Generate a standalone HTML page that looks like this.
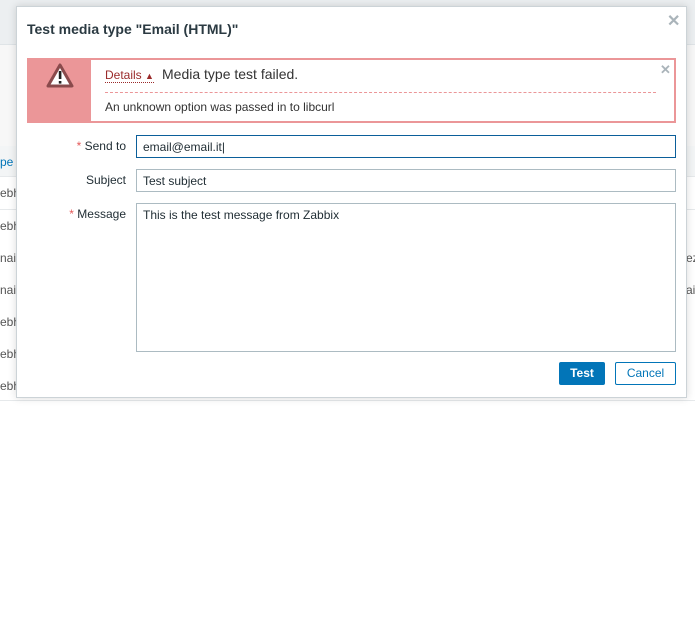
<!DOCTYPE html>
<html><head><style>
body{margin:0;width:695px;height:639px;background:#fff;font-family:"Liberation Sans",Arial,sans-serif;font-size:12px;color:#1f2c33;position:relative;overflow:hidden}
.bg{position:absolute;left:0;top:0;width:695px;height:400px;background:#f7f7f7}
.top{position:absolute;left:0;top:0;width:695px;height:44px;background:#eceff1;border-bottom:1px solid #dfe4e7}
.row{position:absolute;left:0;width:695px;height:32px;border-bottom:1px solid #e6e9eb;background:#fff;color:#555}
.row span{position:absolute;top:9px}
.dlg{position:absolute;left:16px;top:6px;width:669px;height:390px;background:#fff;border:1px solid #ccd3d7;box-shadow:0 0 8px rgba(0,0,0,.15)}
.title{position:absolute;left:10px;top:14px;font-size:14px;font-weight:bold;color:#2b3a42}
.x{position:absolute;color:#aab4ba;font-size:16px;font-weight:bold}
.msg{position:absolute;left:10px;top:51px;width:645px;height:61px;border:2px solid #eb9698;background:#fff}
.msg .red{position:absolute;left:0;top:0;width:62px;height:61px;background:#eb9698}
.lbl{position:absolute;width:109px;text-align:right;color:#1f2c33}
.lbl b{color:#e45959;font-weight:normal}
.in{position:absolute;left:119px;width:540px;border:1px solid #acbbc2;background:#fff;box-sizing:border-box;padding:4px 6px;font-size:12px}
.btn{position:absolute;top:355px;height:23px;box-sizing:border-box;font-size:12px;text-align:center;line-height:23px;border-radius:2px}
</style></head><body>
<div class="bg"></div>
<div class="top"></div>
<div class="row" style="top:146px;height:30px;background:#f3f5f6"><span style="color:#0275b8;left:0">pe</span></div>
<div class="row" style="top:177px"><span>ebh</span></div>
<div class="row" style="top:210px"><span>ebh</span></div>
<div class="row" style="top:242px"><span>nail</span><span style="left:686px">ez</span></div>
<div class="row" style="top:274px"><span>nail</span><span style="left:686px">ai</span></div>
<div class="row" style="top:306px"><span>ebh</span></div>
<div class="row" style="top:338px"><span>ebh</span></div>
<div class="row" style="top:370px;height:30px"><span>ebh</span></div>
<div class="dlg">
<div class="title">Test media type "Email (HTML)"</div>
<div class="x" style="left:650px;top:4px">✕</div>
<div class="msg">
<div class="red"><svg width="62" height="40" viewBox="0 0 62 40"><path d="M31 5 L43 26 L19 26 Z" fill="#fff" stroke="#8a4a4c" stroke-width="3" stroke-linejoin="round"/><rect x="29.8" y="11" width="2.6" height="8" fill="#222"/><rect x="29.8" y="21" width="2.6" height="2.6" fill="#222"/></svg></div>
<div style="position:absolute;left:76px;top:8px;color:#9a2a2a;border-bottom:1px dotted #9a2a2a;font-size:12px">Details <span style="font-size:9px">▲</span></div>
<div style="position:absolute;left:133px;top:6px;font-size:14px;color:#333">Media type test failed.</div>
<div style="position:absolute;left:76px;top:32px;width:551px;border-top:1px dashed #eb9698"></div>
<div style="position:absolute;left:76px;top:40px;color:#333">An unknown option was passed in to libcurl</div>
<div class="x" style="left:631px;top:2px;font-size:13px">✕</div>
</div>
<div class="lbl" style="top:132px"><b>*</b> Send to</div>
<div class="in" style="top:128px;height:23px;border-color:#0b5f9a">email@email.it|</div>
<div class="lbl" style="top:166px">Subject</div>
<div class="in" style="top:162px;height:23px">Test subject</div>
<div class="lbl" style="top:200px"><b>*</b> Message</div>
<div class="in" style="top:196px;height:149px">This is the test message from Zabbix</div>
<div class="btn" style="left:542px;width:46px;background:#0275b8;color:#fff;font-weight:bold">Test</div>
<div class="btn" style="left:598px;width:61px;border:1px solid #0275b8;color:#0275b8;background:#fff;line-height:21px">Cancel</div>
</div>
</body></html>
